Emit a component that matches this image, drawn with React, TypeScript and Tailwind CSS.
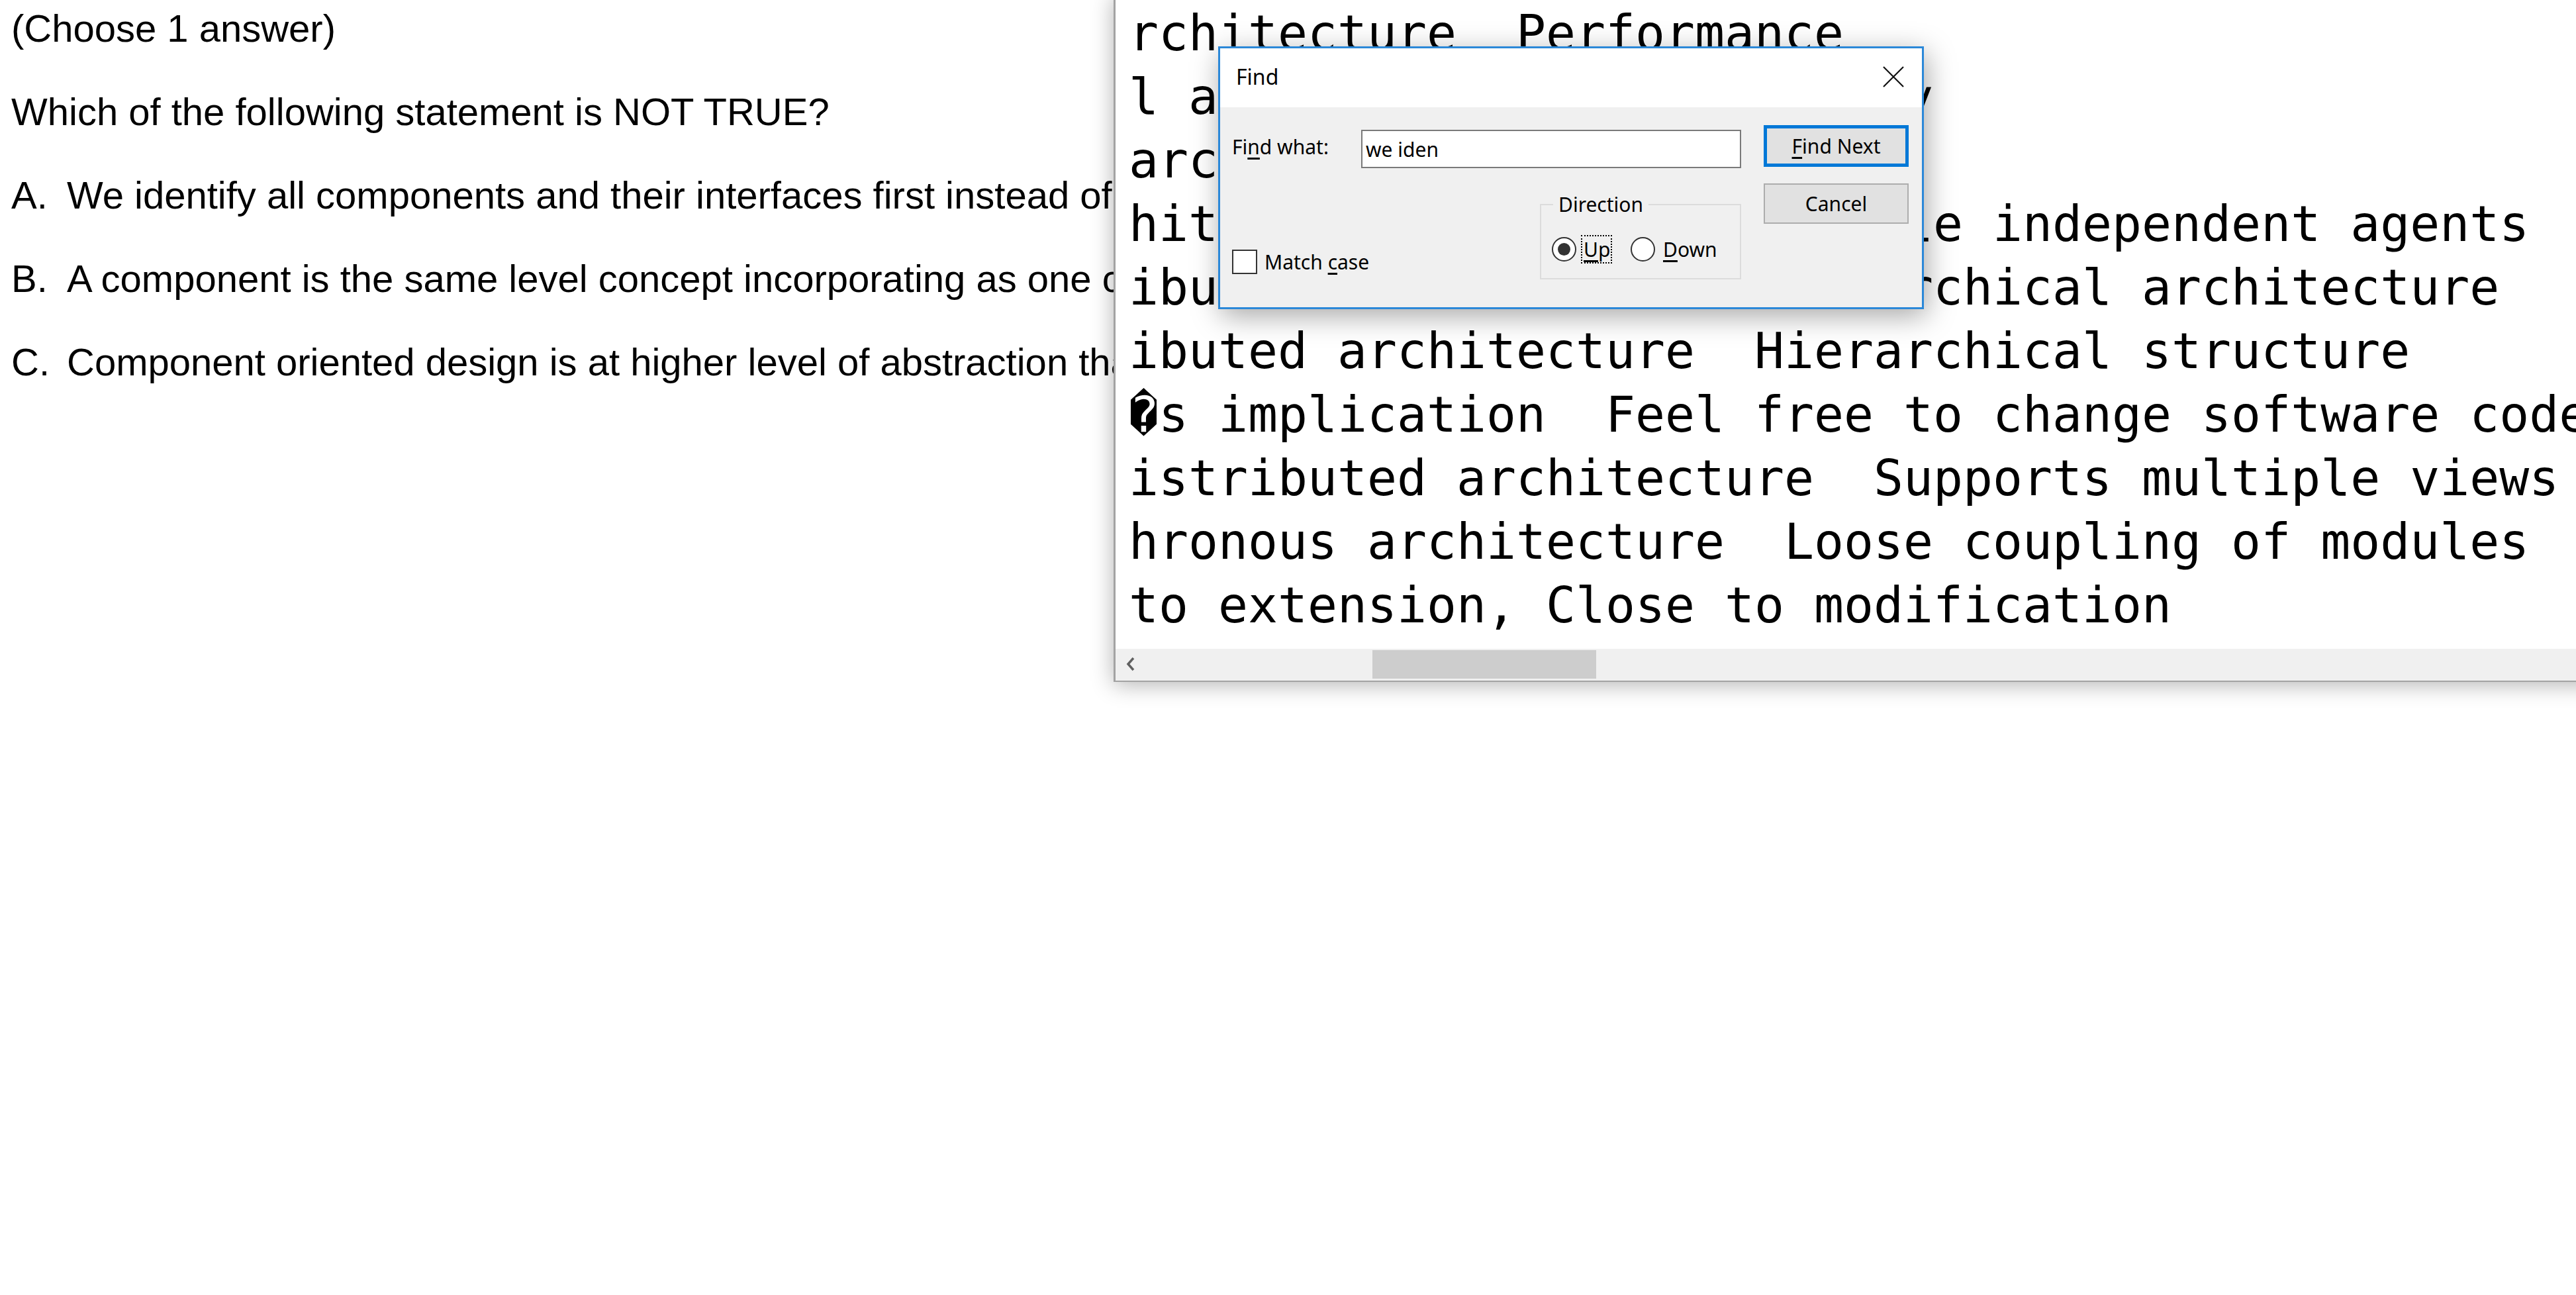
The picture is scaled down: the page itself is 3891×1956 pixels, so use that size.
import React from "react";

const notepadLines = [
  "rchitecture  Performance",
  "l architecture  Reusability",
  "architecture  Modularity",
  "hitecture  Multiple reusable independent agents",
  "ibuted architecture  Hierarchical architecture",
  "ibuted architecture  Hierarchical structure",
  "\uFFFDs implication  Feel free to change software code",
  "istributed architecture  Supports multiple views",
  "hronous architecture  Loose coupling of modules",
  "to extension, Close to modification",
];

function Radio({ checked }: { checked?: boolean }) {
  return (
    <div className="w-[37px] h-[37px] rounded-full border-2 border-[#333333] bg-white flex items-center justify-center shrink-0">
      {checked && <div className="w-[19px] h-[19px] rounded-full bg-[#333333]" />}
    </div>
  );
}

export default function App() {
  return (
    <div className="relative w-[3891px] h-[1956px] overflow-hidden bg-white">
      {/* Question page */}
      <div className="flex flex-col gap-[59px] pl-[17px] pt-[9px] font-['Liberation_Sans',Arial,sans-serif] text-[58px] leading-[67px] text-black whitespace-nowrap">
        <p>(Choose 1 answer)</p>
        <p>Which of the following statement is NOT TRUE?</p>
        <div className="flex">
          <span className="w-[84px] shrink-0">A.</span>
          <span>We identify all components and their interfaces first instead of working with classes</span>
        </div>
        <div className="flex">
          <span className="w-[84px] shrink-0">B.</span>
          <span>A component is the same level concept incorporating as one class</span>
        </div>
        <div className="flex">
          <span className="w-[84px] shrink-0">C.</span>
          <span>Component oriented design is at higher level of abstraction than object oriented design</span>
        </div>
      </div>

      {/* Notepad window */}
      <div className="absolute left-[1682px] top-[-10px] w-[2260px] h-[1040px] bg-white border-l-[3px] border-b-[2px] border-[#a3a3a3] shadow-[0_4px_32px_rgba(0,0,0,0.3)] flex flex-col">
        <div className="flex-1 overflow-hidden pt-[13px] pl-[20px] font-['DejaVu_Sans_Mono',monospace] text-[74.75px] leading-[96px] text-black whitespace-pre">
          {notepadLines.map((l, i) => (
            <div key={i}>{l}</div>
          ))}
        </div>
        <div className="h-[48px] bg-[#f0f0f0] flex items-start shrink-0">
          <div className="w-[46px] h-[46px] flex items-center justify-center">
            <svg width="14" height="22" viewBox="0 0 14 22">
              <path d="M11 2 L3 11 L11 20" fill="none" stroke="#606060" strokeWidth="3.5" />
            </svg>
          </div>
          <div className="ml-[342px] mt-[2px] w-[338px] h-[43px] bg-[#cdcdcd]" />
        </div>
      </div>

      {/* Find dialog */}
      <div className="absolute left-[1840px] top-[70px] w-[1066px] h-[397px] border-[3px] border-[#2b88d8] bg-[#f0f0f0] flex flex-col shadow-[4px_10px_40px_rgba(0,0,0,0.35)] font-['Noto_Sans',sans-serif] text-black">
        <div className="h-[89px] bg-white flex items-center justify-between pl-[24px] pr-[27px] pb-[4px] shrink-0">
          <span className="text-[32px] leading-[44px]">Find</span>
          <svg width="32" height="32" viewBox="0 0 32 32">
            <path d="M1 1 L31 31 M31 1 L1 31" stroke="#111111" strokeWidth="2.2" />
          </svg>
        </div>
        <div className="flex pl-[18px] pt-[27px] gap-[34px] text-[30px] leading-[41px]">
          <div className="flex flex-col w-[769px]">
            <div className="flex items-start">
              <span className="w-[195px] mt-[12px] shrink-0">
                Fi<u className="underline-offset-[5px]">n</u>d what:
              </span>
              <div className="mt-[7px] w-[574px] h-[58px] border-2 border-[#7a7a7a] bg-white flex items-center pl-[5px]">
                we iden
              </div>
            </div>
            <div className="flex justify-between items-end mt-[34px]">
              <div className="flex items-center gap-[11px] mb-[6px]">
                <div className="w-[38px] h-[37px] border-2 border-[#333333] bg-white" />
                <span>
                  Match <u className="underline-offset-[5px]">c</u>ase
                </span>
              </div>
              <fieldset className="w-[304px] border-2 border-[#dcdcdc] m-0 p-0">
                <legend className="ml-[18px] px-[8px]">Direction</legend>
                <div className="flex items-center pt-[26px] pb-[22px] pl-[16px]">
                  <Radio checked />
                  <div className="ml-[7px] w-[47px] h-[43px] border-2 border-dotted border-black flex items-center pl-[2px]">
                    <u className="underline-offset-[5px]">U</u>p
                  </div>
                  <div className="ml-[28px]">
                    <Radio />
                  </div>
                  <span className="ml-[12px]">
                    <u className="underline-offset-[5px]">D</u>own
                  </span>
                </div>
              </fieldset>
            </div>
          </div>
          <div className="flex flex-col w-[219px]">
            <div className="h-[63px] border-[5px] border-[#0078d7] bg-[#e1e1e1] flex items-center justify-center">
              <span>
                <u className="underline-offset-[5px]">F</u>ind Next
              </span>
            </div>
            <div className="mt-[25px] h-[61px] border-2 border-[#adadad] bg-[#e1e1e1] flex items-center justify-center">
              Cancel
            </div>
          </div>
        </div>
      </div>
    </div>
  );
}
